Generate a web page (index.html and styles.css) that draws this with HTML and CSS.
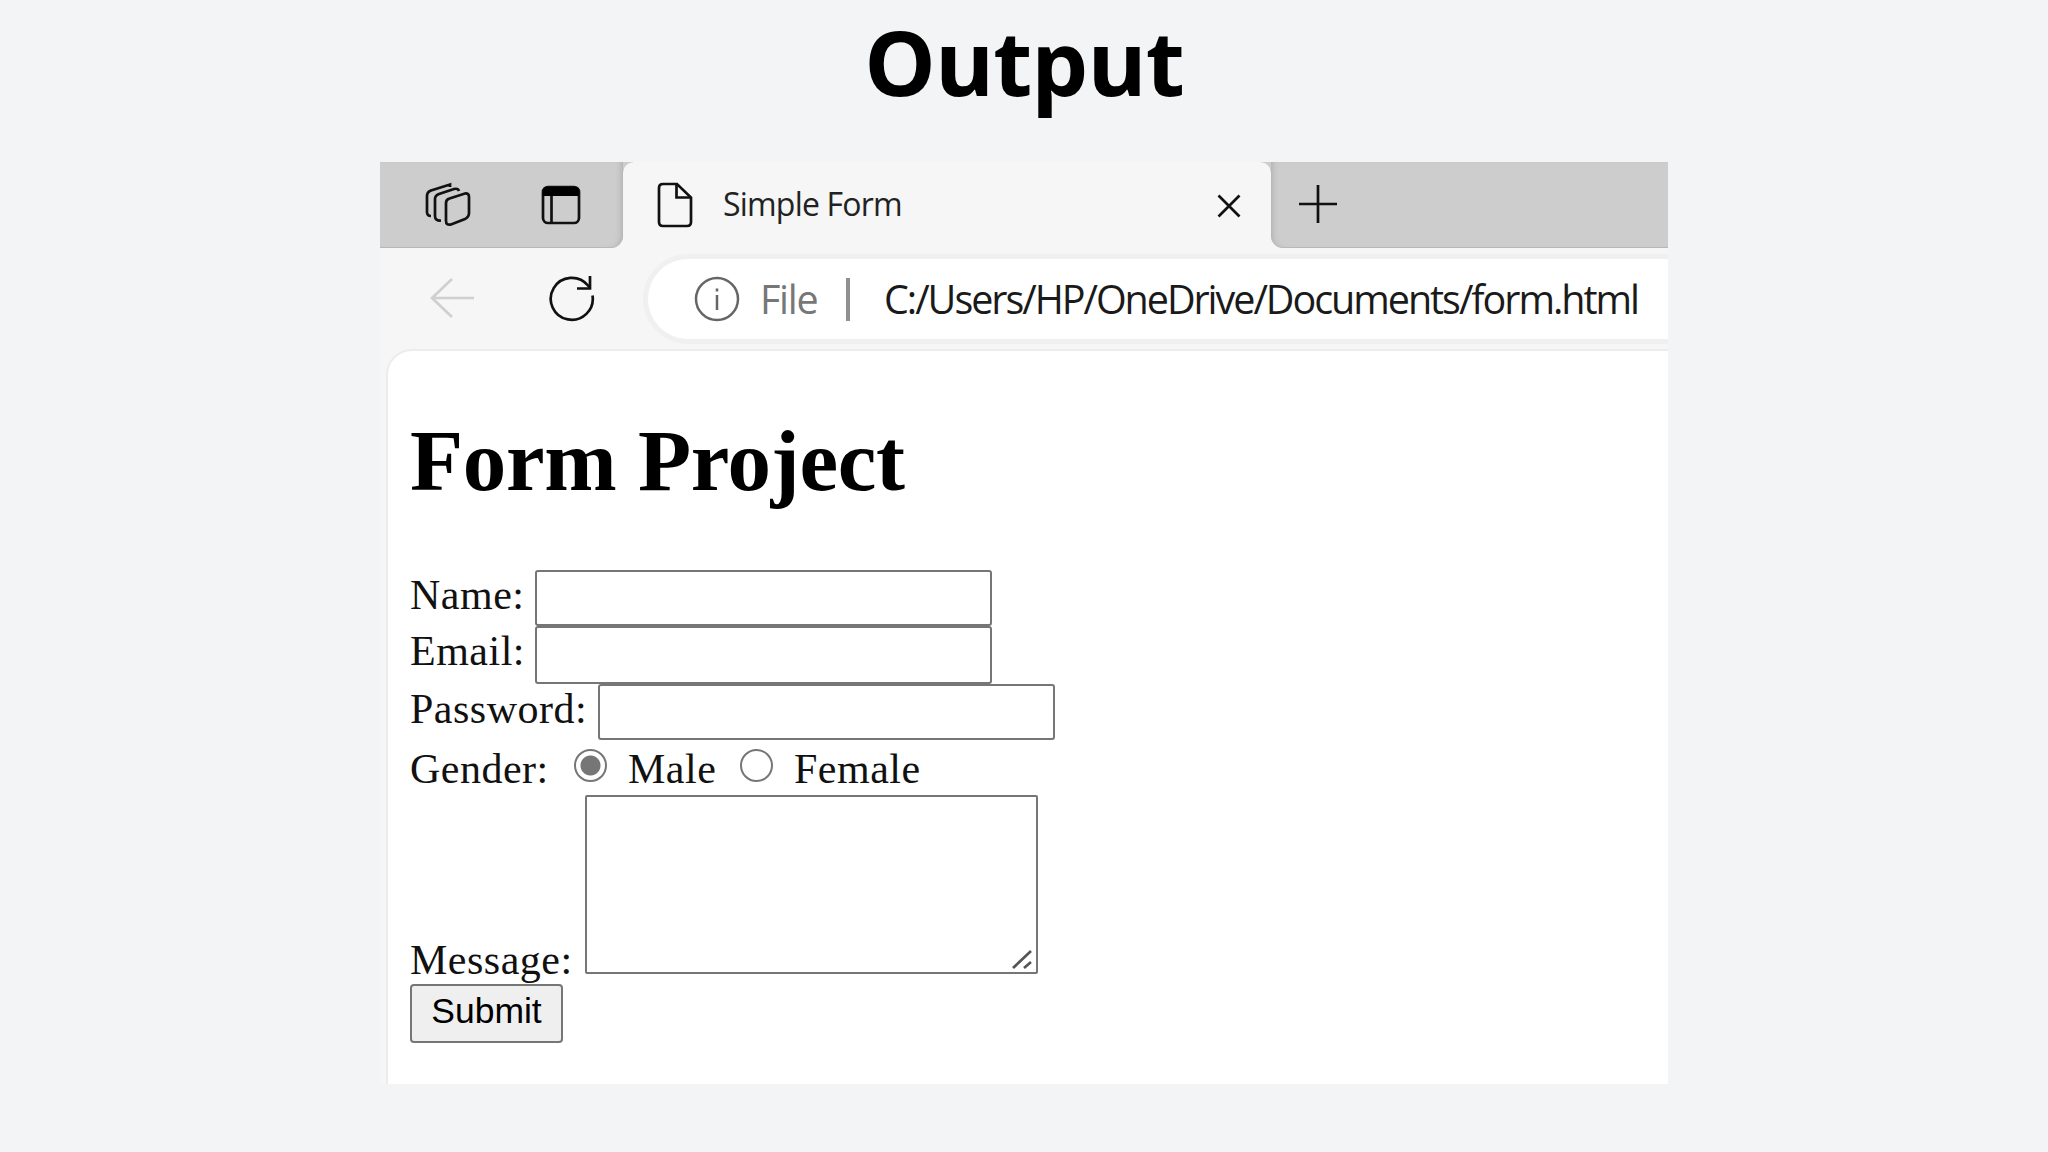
FILE: index.html
```html
<!DOCTYPE html>
<html lang="en">

<head>
    <meta charset="UTF-8">
    <meta name="viewport" content="width=device-width, initial-scale=1.0">
    <title>Simple Form</title>
    <link rel="stylesheet" href="styles.css">
</head>

<body>

    <h1 class="slide-title"><span>Output</span></h1>

    <div class="browser">
        <div class="tab-bar">
            <div class="tab-tools">
                <svg class="icon-workspaces" width="48" height="48" viewBox="0 0 48 48">
                    <path d="M26 5 V2.500 L7 8.500 Q3 10 3 14 V30 Q3 34 7 34" />
                    <path d="M35 9 Q34 6 30 7 L15 12 Q11 13.500 11 17 V34 Q11 39 17 38.500" />
                    <path d="M22 21 Q22 17.500 25.500 16.500 L41 11.500 Q45 11 45 15 V31 Q45 35 41 37 L27 42.500 Q22 43.500 22 39 Z" />
                </svg>
                <svg class="icon-layout" width="40" height="40" viewBox="0 0 40 40">
                    <rect x="2" y="2" width="36" height="36" rx="5" />
                    <path class="fill" d="M2 11 V7 Q2 2 7 2 H33 Q38 2 38 7 V11 Z" />
                    <path d="M10.500 11 V38" />
                </svg>
            </div>
            <div class="tab">
                <svg class="icon-file" width="36" height="46" viewBox="0 0 36 46">
                    <path d="M6 2 H20 L34 15.500 V40 Q34 44 30 44 H6 Q2 44 2 40 V6 Q2 2 6 2 Z" />
                    <path d="M19.500 2 V15.500 H34" />
                </svg>
                <span class="tab-title">Simple Form</span>
                <svg class="icon-close" width="24" height="24" viewBox="0 0 24 24">
                    <path d="M1.500 1.500 L22.500 22.500 M22.500 1.500 L1.500 22.500" />
                </svg>
            </div>
            <div class="tab-rest">
                <svg class="icon-plus" width="38" height="38" viewBox="0 0 38 38">
                    <path d="M19 0 V38 M0 19 H38" />
                </svg>
            </div>
        </div>

        <div class="toolbar">
            <svg class="icon-back" width="46" height="42" viewBox="0 0 46 42">
                <path d="M22 2 L2 21 L22 40 M2 21 H44" />
            </svg>
            <svg class="icon-reload" width="48" height="48" viewBox="0 0 48 48">
                <path d="M44.500 21.500 A21 21 0 1 1 40 11.500 L42 14" />
                <path d="M42 2 V14.500 H29" />
            </svg>
            <div class="address">
                <svg class="icon-info" width="46" height="46" viewBox="0 0 46 46">
                    <circle cx="23" cy="23" r="21" />
                    <path d="M23 19 V34 M23 12.500 V15.500" />
                </svg>
                <span class="scheme">File</span>
                <span class="divider"></span>
                <span class="url">C:/Users/HP/OneDrive/Documents/form.html</span>
            </div>
        </div>

        <div class="page">
            <h1 class="page-title">Form Project</h1>
            <form>
                <div class="row row-name">
                    <label for="name">Name:</label>
                    <input type="text" id="name" class="field">
                </div>
                <div class="row row-email">
                    <label for="email">Email:</label>
                    <input type="email" id="email" class="field">
                </div>
                <div class="row row-password">
                    <label for="password">Password:</label>
                    <input type="password" id="password" class="field">
                </div>
                <div class="row row-gender">
                    <span class="gender-label">Gender:</span>
                    <input type="radio" id="male" name="gender" class="radio" checked>
                    <label for="male" class="male">Male</label>
                    <input type="radio" id="female" name="gender" class="radio">
                    <label for="female" class="female">Female</label>
                </div>
                <div class="row row-message">
                    <label for="message">Message:</label>
                    <div class="message-box">
                        <textarea id="message"></textarea>
                        <svg class="grip" width="22" height="20" viewBox="0 0 22 20">
                            <path d="M2 18 L20 1 M13 18 L20 12" />
                        </svg>
                    </div>
                </div>
                <button type="button" class="submit">Submit</button>
            </form>
        </div>
    </div>

</body>

</html>
```

FILE: styles.css
```css
* {
    box-sizing: border-box;
}

body {
    margin: 0;
    height: 1152px;
    background-color: #f2f4f6;
    overflow: hidden;
}

svg {
    display: block;
    flex: none;
    fill: none;
    stroke: #111;
    stroke-width: 2.7;
}

.slide-title {
    margin: 0;
    height: 162px;
    text-align: center;
    font: bold 90px/123px "Open Sans", sans-serif;
    letter-spacing: -0.9px;
    color: #000;
}

/* Browser window */
.browser {
    width: 1288px;
    height: 922px;
    margin-left: 380px;
    background-color: #f6f6f6;
    overflow: hidden;
}

.tab-bar {
    display: flex;
    height: 86px;
}

.tab-tools {
    display: flex;
    width: 243px;
    padding: 20px 0 0 44px;
    gap: 69px;
    background-color: #cdcdcd;
    border-bottom: 1px solid #b8b8b8;
    border-bottom-right-radius: 12px;
    box-shadow: inset -6px 0 6px -5px #aaa;
}

.icon-layout {
    margin-top: 3px;
}

.icon-layout .fill {
    fill: #000;
    stroke: none;
}

/* The gradients cut the two rounded top corners */
.tab {
    display: flex;
    width: 648px;
    padding-left: 34px;
    background:
        radial-gradient(circle at 100% 100%, transparent 9px, #cdcdcd 10px) 0 0 / 10px 10px no-repeat,
        radial-gradient(circle at 0 100%, transparent 9px, #cdcdcd 10px) 100% 0 / 10px 10px no-repeat;
}

.icon-file {
    margin-top: 20px;
}

.tab-title {
    width: 524px;
    padding-left: 30px;
    font: 32px/84px "Open Sans", sans-serif;
    letter-spacing: -0.8px;
    color: #222;
    white-space: nowrap;
}

.icon-close {
    margin-top: 32px;
}

.tab-rest {
    flex: 1;
    padding: 23px 0 0 28px;
    background-color: #cdcdcd;
    border-bottom: 1px solid #b8b8b8;
    border-bottom-left-radius: 12px;
    box-shadow: inset 6px 0 6px -5px #aaa;
}

.toolbar {
    display: flex;
    height: 103px;
    padding-left: 50px;
}

.icon-back {
    margin-top: 29px;
    stroke: #d0d0d0;
}

.icon-reload {
    margin: 26px 0 0 72px;
}

.address {
    display: flex;
    flex: 1;
    height: 80px;
    margin: 11px 0 0 52px;
    padding-left: 46px;
    background-color: #fff;
    border-radius: 40px 0 0 40px;
    box-shadow: 0 0 0 5px #f0f0f0;
    font: 39.5px/80px "Open Sans", sans-serif;
    white-space: nowrap;
}

.icon-info {
    margin-top: 17px;
    stroke: #666;
    stroke-width: 2.5;
}

.scheme {
    width: 106px;
    padding-left: 20px;
    letter-spacing: -1.3px;
    color: #777;
}

.divider {
    width: 4px;
    height: 43px;
    margin-top: 19px;
    background-color: #909090;
}

.url {
    padding-left: 34px;
    letter-spacing: -2.04px;
    color: #1a1a1a;
}

/* Page content */
.page {
    height: 733px;
    margin-left: 8px;
    padding: 70px 0 0 22px;
    background-color: #fff;
    border-top-left-radius: 24px;
    box-shadow: 0 0 0 2px #ececec;
    font: 42px/50px "Liberation Serif", serif;
    letter-spacing: 0.5px;
    color: #111;
}

.page-title {
    margin: 0;
    height: 149px;
    font-size: 87px;
    line-height: 80px;
    letter-spacing: -0.3px;
    color: #000;
    white-space: nowrap;
}

.row {
    display: flex;
    white-space: nowrap;
}

.row-name {
    height: 56px;
}

.row-email {
    height: 58px;
}

.row-name label,
.row-email label {
    width: 125px;
}

.row-password {
    height: 58px;
}

.row-password label {
    width: 188px;
}

.field {
    width: 457px;
    height: 56px;
    margin: 0;
    padding: 2px 6px;
    border: 2px solid #767676;
    border-radius: 3px;
    background-color: #fff;
    font: 35px "Liberation Sans", sans-serif;
}

.row-email .field {
    height: 58px;
}

.row-gender {
    height: 53px;
    line-height: 55px;
}

.gender-label {
    width: 164px;
}

.radio {
    appearance: none;
    width: 33px;
    height: 33px;
    margin: 7px 0 0;
    border: 2.5px solid #767676;
    border-radius: 50%;
    background-color: #fff;
}

.radio:checked {
    background: radial-gradient(circle, #767676 9.5px, #fff 10.5px);
}

.male {
    width: 133px;
    padding-left: 21px;
}

.female {
    padding-left: 21px;
}

.row-message {
    height: 189px;
}

.row-message label {
    width: 175px;
    padding-top: 140px;
}

.message-box {
    position: relative;
    width: 453px;
    height: 179px;
}

.message-box textarea {
    display: block;
    width: 100%;
    height: 100%;
    border: 2px solid #767676;
    border-radius: 2px;
    resize: none;
}

.grip {
    position: absolute;
    right: 5px;
    bottom: 4px;
    stroke: #555;
}

.submit {
    display: block;
    width: 153px;
    height: 59px;
    padding: 0 0 6px;
    border: 2px solid #767676;
    border-radius: 4px;
    background-color: #efefef;
    font: 35.5px/48px "Liberation Sans", sans-serif;
    color: #000;
}
```
